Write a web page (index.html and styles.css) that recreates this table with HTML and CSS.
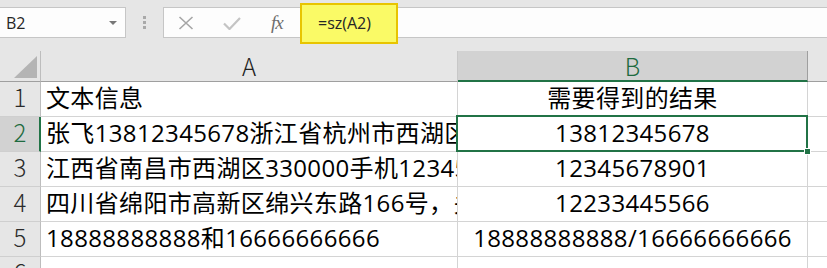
FILE: index.html
```html
<!DOCTYPE html>
<html lang="zh-CN">
<head>
<meta charset="utf-8">
<title>Excel</title>
<link rel="stylesheet" href="styles.css">
</head>
<body>
<div class="app">
  <div class="toolbar">
    <div class="namebox">
      <span class="nb-text">B2</span>
      <span class="nb-arrow"></span>
    </div>
    <div class="grip"><i></i><i></i><i></i></div>
    <div class="fbar">
      <div class="fb-icons">
        <svg class="ic-x" width="16" height="14" viewBox="0 0 16 14"><path d="M1.5 1 L14.5 13 M14.5 1 L1.5 13" stroke="#a6a6a6" stroke-width="1.6" fill="none"/></svg>
        <svg class="ic-ok" width="18" height="13" viewBox="0 0 18 13"><path d="M1 6.5 L6.5 12 L17 1" stroke="#c4c4c4" stroke-width="2.2" fill="none"/></svg>
        <span class="ic-fx">fx</span>
      </div>
      <div class="fb-input">
        <div class="hl">=sz(A2)</div>
      </div>
    </div>
  </div>
  <div class="sheet">
    <div class="corner"><span class="tri"></span></div>
    <div class="ch">A</div>
    <div class="ch ch-sel">B</div>
    <div class="ch ch-rest"></div>

    <div class="rh">1</div>
    <div class="c ca">文本信息</div>
    <div class="c cb">需要得到的结果</div>
    <div class="c cr"></div>

    <div class="rh rh-sel">2</div>
    <div class="c ca">张飞13812345678浙江省杭州市西湖区文三路90号</div>
    <div class="c cb sel">13812345678<span class="selbox"></span><span class="handle"></span></div>
    <div class="c cr"></div>

    <div class="rh">3</div>
    <div class="c ca">江西省南昌市西湖区330000手机12345678901</div>
    <div class="c cb">12345678901</div>
    <div class="c cr"></div>

    <div class="rh">4</div>
    <div class="c ca">四川省绵阳市高新区绵兴东路166号，关羽12233445566</div>
    <div class="c cb">12233445566</div>
    <div class="c cr"></div>

    <div class="rh">5</div>
    <div class="c ca">18888888888和16666666666</div>
    <div class="c cb">18888888888/16666666666</div>
    <div class="c cr"></div>

    <div class="rh">6</div>
    <div class="c ca"></div>
    <div class="c cb"></div>
    <div class="c cr"></div>
  </div>
</div>
</body>
</html>
```
FILE: styles.css
```css
html, body {
  margin: 0;
  padding: 0;
  background: #e6e6e6;
  overflow: hidden;
}
.app {
  width: 827px;
  height: 268px;
  overflow: hidden;
  font-family: "Noto Sans CJK SC", "Noto Sans", sans-serif;
  color: #000;
}
.toolbar {
  height: 51px;
  display: flex;
  align-items: flex-start;
  padding-top: 7px;
  box-sizing: border-box;
  background: #e6e6e6;
}
.namebox {
  width: 126px;
  height: 31px;
  box-sizing: border-box;
  border: 1px solid #c6c6c6;
  border-left: none;
  background: #fdfdfd;
  display: flex;
  align-items: center;
  justify-content: space-between;
  padding: 0 8px 0 6px;
  flex: none;
}
.nb-text {
  font-family: "Open Sans", "Noto Sans", sans-serif;
  font-size: 16px;
  color: #262626;
  line-height: 1;
  margin-top: 1px;
}
.nb-arrow {
  width: 0;
  height: 0;
  border-left: 4px solid transparent;
  border-right: 4px solid transparent;
  border-top: 4px solid #777;
  margin-top: 1px;
}
.grip {
  width: 37px;
  height: 31px;
  display: flex;
  flex-direction: column;
  align-items: center;
  justify-content: center;
  gap: 2px;
  flex: none;
}
.grip i {
  display: block;
  width: 3px;
  height: 3px;
  background: #a9a9a9;
}
.fbar {
  flex: 1;
  height: 31px;
  box-sizing: border-box;
  border: 1px solid #c6c6c6;
  border-right: none;
  background: #fdfdfd;
  display: flex;
  align-items: center;
}
.fb-icons {
  width: 136px;
  display: flex;
  align-items: center;
  padding-left: 14px;
  box-sizing: border-box;
  flex: none;
}
.ic-x { margin-top: 1px; }
.ic-ok { margin-left: 29px; margin-top: 2px; }
.ic-fx {
  margin-left: 30px;
  font-family: "Liberation Serif", serif;
  font-style: italic;
  font-size: 19px;
  color: #6e6e6e;
  line-height: 1;
  letter-spacing: -1px;
}
.fb-input {
  position: relative;
  flex: 1;
  height: 100%;
}
.hl {
  position: absolute;
  left: 0;
  top: -5px;
  width: 98px;
  height: 41px;
  box-sizing: border-box;
  border: 2px solid #e8c400;
  background: #fafa66;
  font-family: "Open Sans", "Noto Sans", sans-serif;
  font-size: 16px;
  color: #262626;
  line-height: 36px;
  padding-left: 16px;
}
.sheet {
  display: grid;
  grid-template-columns: 41px 417px 350px 1fr;
  grid-template-rows: 31px repeat(6, 35px);
  background: #fff;
}
.corner {
  background: #e6e6e6;
  border-right: 1px solid #bdbdbd;
  border-bottom: 1px solid #9f9f9f;
  position: relative;
}
.tri {
  position: absolute;
  right: 3px;
  bottom: 3px;
  width: 0;
  height: 0;
  border-left: 23px solid transparent;
  border-bottom: 22px solid #b4b4b4;
}
.ch {
  background: #e6e6e6;
  border-right: 1px solid #c8c8c8;
  border-bottom: 1px solid #9f9f9f;
  text-align: center;
  font-size: 24px;
  font-weight: 300;
  line-height: 29px;
  color: #222;
}
.ch-sel {
  background: #d2d2d2;
  border-right-color: #9f9f9f;
  border-bottom: 2px solid #217346;
  color: #1e6b40;
}
.ch-rest {
  border-right: none;
}
.rh {
  background: #e6e6e6;
  border-right: 1px solid #bdbdbd;
  border-bottom: 1px solid #cfcfcf;
  text-align: center;
  font-size: 24px;
  font-weight: 300;
  line-height: 30px;
  color: #2b2b2b;
}
.rh-sel {
  background: #d2d2d2;
  border-right: 2px solid #217346;
  color: #1e6b40;
  padding-left: 1px;
}
.c {
  border-right: 1px solid #d4d4d4;
  border-bottom: 1px solid #d4d4d4;
  font-family: "Open Sans", "Noto Sans CJK SC", sans-serif;
  font-size: 24px;
  line-height: 31px;
  letter-spacing: 0.35px;
  white-space: nowrap;
  color: #000;
}
.ca {
  padding-left: 5px;
  overflow: hidden;
}
.cb {
  text-align: center;
  overflow: visible;
}
.cr {
  border-right: none;
}
.sel {
  position: relative;
}
.selbox {
  position: absolute;
  left: -2px;
  top: -2px;
  right: -1px;
  bottom: -1px;
  border: 2px solid #217346;
}
.handle {
  position: absolute;
  right: -4px;
  bottom: -4px;
  width: 5px;
  height: 5px;
  background: #217346;
  border: 1px solid #fff;
}
```
